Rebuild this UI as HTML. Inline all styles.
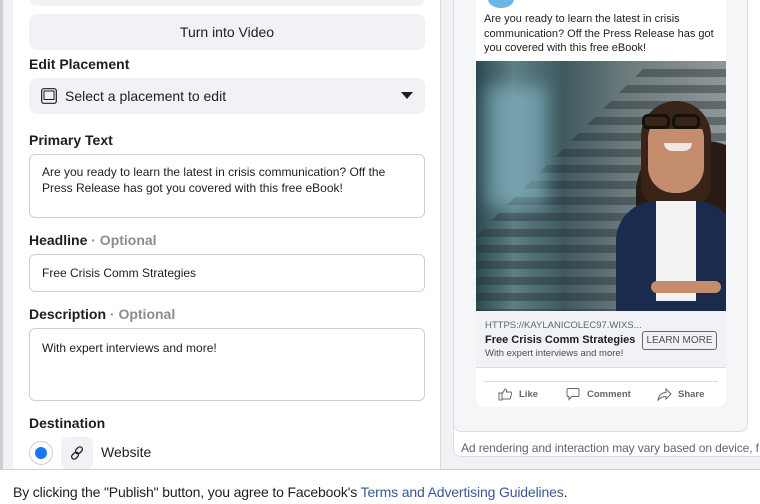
<!DOCTYPE html>
<html><head><meta charset="utf-8"><style>
*{box-sizing:border-box;margin:0;padding:0}
body{width:760px;height:504px;overflow:hidden;background:#f0f2f5;font-family:"Liberation Sans",Arial,sans-serif;color:#1c1e21;position:relative}
.abs{position:absolute}
.left{left:13px;top:0;width:428px;height:470px;background:#fff;border-right:1px solid #dadde1}
.btn{position:absolute;left:29px;width:396px;background:#f0f2f5;border-radius:8px}
.lbl{position:absolute;left:29px;font-size:14px;font-weight:bold;color:#1c1e21}
.lbl span{color:#8a8d91}
.inp{position:absolute;left:29px;width:396px;border:1px solid #ccd0d5;border-radius:6px;background:#fff;font-size:12px;color:#1c1e21;padding:0 12px;line-height:16px}
</style></head><body>
<div class="abs" style="left:0;top:0;width:3px;height:470px;background:#ccd0d5"></div>
<div class="abs left"></div>
<div class="btn" style="top:-10px;height:16px"></div>
<div class="btn" style="top:14px;height:36px;text-align:center;line-height:36px;font-size:14px">Turn into Video</div>
<div class="lbl" style="top:56px">Edit Placement</div>
<div class="btn" style="top:78px;height:36px;font-size:14px;line-height:36px;padding-left:36px">Select a placement to edit
<svg class="abs" style="left:12px;top:10px" width="16" height="16" viewBox="0 0 16 16"><rect x="0.7" y="0.7" width="14.6" height="14.6" rx="2" fill="none" stroke="#1c1e21" stroke-width="1.2"/><rect x="3" y="3" width="10" height="8.5" fill="none" stroke="#1c1e21" stroke-width="1"/></svg>
<svg class="abs" style="right:12px;top:14px" width="12" height="8" viewBox="0 0 12 8"><path d="M0 0h12L6 7z" fill="#1c1e21"/></svg></div>
<div class="lbl" style="top:132px">Primary Text</div>
<div class="inp" style="top:154px;height:64px;padding-top:9px">Are you ready to learn the latest in crisis communication? Off the Press Release has got you covered with this free eBook!</div>
<div class="lbl" style="top:232px">Headline <span>· Optional</span></div>
<div class="inp" style="top:254px;height:38px;line-height:36px">Free Crisis Comm Strategies</div>
<div class="lbl" style="top:306px">Description <span>· Optional</span></div>
<div class="inp" style="top:328px;height:73px;padding-top:11px">With expert interviews and more!</div>
<div class="lbl" style="top:415px">Destination</div>
<div class="abs" style="left:29px;top:441px;width:24px;height:24px;border:1px solid #ccd0d5;border-radius:50%;background:#fff"><div class="abs" style="left:5px;top:5px;width:12px;height:12px;border-radius:50%;background:#1877f2"></div></div>
<div class="abs" style="left:61px;top:437px;width:32px;height:32px;background:#f0f2f5;border-radius:6px">
<svg class="abs" style="left:8px;top:8px" width="16" height="16" viewBox="0 0 16 16" fill="none" stroke="#1c1e21" stroke-width="1.3"><path d="M7 9l2-2"/><rect x="7.5" y="1.5" width="5" height="7.5" rx="2.5" transform="rotate(45 10 5.2)"/><rect x="3.5" y="7" width="5" height="7.5" rx="2.5" transform="rotate(45 6 10.8)"/></svg></div>
<div class="abs" style="left:101px;top:444px;font-size:14px">Website</div>

<div class="abs" style="left:453px;top:-10px;width:320px;height:467px;background:#fff;border:1px solid #dadde1;border-radius:8px"></div>
<div class="abs" style="left:453px;top:-10px;width:295px;height:442px;background:#f5f6f7;border:1px solid #dadde1;border-radius:8px"></div>
<div class="abs" style="left:461px;top:441px;font-size:12px;color:#606770;white-space:nowrap;letter-spacing:-0.1px">Ad rendering and interaction may vary based on device, f</div>
<div class="abs" style="left:476px;top:-10px;width:250px;height:417px;background:#fff;border-radius:8px;overflow:hidden">
<div class="abs" style="left:12px;top:0;width:26px;height:18px;border-radius:50%;background:#6cb6e6"></div>
<div class="abs" style="left:8px;top:22px;width:240px;font-size:11px;line-height:14.5px">Are you ready to learn the latest in crisis communication? Off the Press Release has got you covered with this free eBook!</div>
<div class="abs" style="left:0;top:71px;width:250px;height:250px;overflow:hidden;background:linear-gradient(90deg,#2c4850 0%,#5e7f86 15%,#3e5a60 35%,#6d7a7c 60%,#8f9799 100%)">
<div class="abs" style="left:0;top:0;width:250px;height:250px;background:repeating-linear-gradient(180deg,rgba(0,0,0,0) 0 8px,rgba(40,50,55,.45) 8px 16px);clip-path:polygon(0 100%,0 70%,70% 0,100% 0,100% 100%)"></div>
<div class="abs" style="left:10px;top:25px;width:60px;height:120px;background:#8fc6d8;opacity:.5;filter:blur(8px)"></div>
<div class="abs" style="left:160px;top:80px;width:120px;height:200px;background:#2a1a14;border-radius:50px 50px 0 0"></div>
<div class="abs" style="left:165px;top:40px;width:70px;height:105px;background:#3a2418;border-radius:35px 35px 20px 20px"></div>
<div class="abs" style="left:172px;top:50px;width:56px;height:82px;background:#c48e6e;border-radius:28px 28px 26px 26px"></div>
<div class="abs" style="left:168px;top:50px;width:60px;height:18px;background:#3a2418;border-radius:30px 30px 0 0"></div>
<div class="abs" style="left:166px;top:53px;width:28px;height:15px;border:3px solid #111;border-radius:6px"></div>
<div class="abs" style="left:196px;top:53px;width:28px;height:15px;border:3px solid #111;border-radius:6px"></div>
<div class="abs" style="left:188px;top:82px;width:28px;height:8px;background:#f3e6e0;border-radius:0 0 12px 12px"></div>
<div class="abs" style="left:140px;top:140px;width:120px;height:120px;background:#1b2b4d;border-radius:40px 40px 0 0"></div>
<div class="abs" style="left:180px;top:140px;width:40px;height:100px;background:#f2f2f0"></div>
<div class="abs" style="left:175px;top:220px;width:70px;height:12px;background:#c48e6e;border-radius:6px"></div>
</div>
<div class="abs" style="left:0;top:321px;width:250px;height:57px;background:#f0f2f5;border-bottom:1px solid #dadde1">
<div class="abs" style="left:9px;top:9px;font-size:9.5px;color:#606770">HTTPS://KAYLANICOLEC97.WIXS...</div>
<div class="abs" style="left:9px;top:23px;font-size:11px;font-weight:bold">Free Crisis Comm Strategies</div>
<div class="abs" style="left:9px;top:37px;font-size:9.5px;color:#4b4f56">With expert interviews and more!</div>
<div class="abs" style="left:166px;top:20px;width:75px;height:19px;border:1px solid #606770;border-radius:3px;font-size:10px;color:#4b4f56;text-align:center;line-height:17px">LEARN MORE</div>
</div>
<div class="abs" style="left:8px;top:391px;width:234px;height:1px;background:#dadde1"></div>
<div class="abs" style="left:0;top:398px;width:250px;font-size:9.5px;font-weight:bold;color:#606770">
<svg class="abs" style="left:22px;top:-1px" width="14" height="14" viewBox="0 0 14 14" fill="none" stroke="#606770" stroke-width="1"><path d="M1 6h3v7H1zM4 7l3-5c1 0 2 1 1.5 3H12.5c1 0 1.5 1 1 2l-1.5 5H4"/></svg>
<span class="abs" style="left:43px;top:1px">Like</span>
<svg class="abs" style="left:90px;top:-1px" width="14" height="14" viewBox="0 0 14 14" fill="none" stroke="#606770" stroke-width="1"><path d="M2 1.5h10a1 1 0 011 1v6a1 1 0 01-1 1H6l-3 3v-3H2a1 1 0 01-1-1v-6a1 1 0 011-1z"/></svg>
<span class="abs" style="left:111px;top:1px">Comment</span>
<svg class="abs" style="left:181px;top:-1px" width="15" height="14" viewBox="0 0 15 14" fill="none" stroke="#606770" stroke-width="1"><path d="M9 2l5 5-5 5V9.5C5 9.5 3 11 1 13c1-5 4-7.5 8-7.5z"/></svg>
<span class="abs" style="left:202px;top:1px">Share</span>
</div>
</div>

<div class="abs" style="left:0;top:469px;width:760px;height:35px;background:#fff;border-top:1px solid #ccd0d5"></div>
<div class="abs" style="left:13px;top:484px;font-size:14px;letter-spacing:-0.15px;color:#1c1e21;white-space:nowrap">By clicking the "Publish" button, you agree to Facebook's <span style="color:#385898">Terms and Advertising Guidelines</span>.</div>
</body></html>
